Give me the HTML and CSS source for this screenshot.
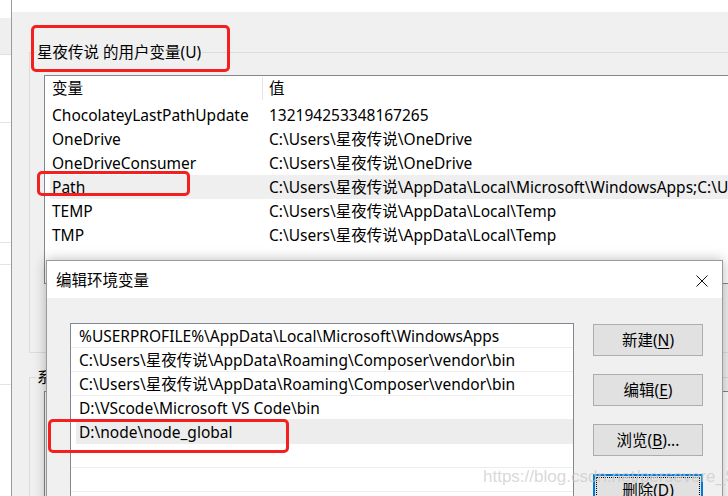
FILE: index.html
```html
<!DOCTYPE html>
<html lang="zh-CN">
<head>
<meta charset="utf-8">
<title>编辑环境变量</title>
<link rel="stylesheet" href="styles.css">
</head>
<body>
<div class="screen">
  <div class="side">
    <div class="side-a"></div>
    <div class="side-b"></div>
    <div class="side-c"></div>
    <div class="side-d"></div>
    <div class="side-e"></div>
    <div class="side-f"></div>
  </div>
  <div class="main">
    <div class="main-top"></div>
    <div class="main-body">
      <fieldset class="group group-user">
        <legend class="group-label">星夜传说 的用户变量(U)</legend>
        <div class="list">
          <div class="list-head">
            <div class="head-cell">变量</div>
            <div class="head-cell head-last">值</div>
          </div>
          <div class="row"><div class="c1">ChocolateyLastPathUpdate</div><div class="c2">132194253348167265</div></div>
          <div class="row"><div class="c1">OneDrive</div><div class="c2">C:\Users\星夜传说\OneDrive</div></div>
          <div class="row"><div class="c1">OneDriveConsumer</div><div class="c2">C:\Users\星夜传说\OneDrive</div></div>
          <div class="row row-sel"><div class="c1">Path</div><div class="c2">C:\Users\星夜传说\AppData\Local\Microsoft\WindowsApps;C:\Users\星夜传说\AppData\Roaming</div></div>
          <div class="row"><div class="c1">TEMP</div><div class="c2">C:\Users\星夜传说\AppData\Local\Temp</div></div>
          <div class="row"><div class="c1">TMP</div><div class="c2">C:\Users\星夜传说\AppData\Local\Temp</div></div>
        </div>
      </fieldset>
      <fieldset class="group group-sys">
        <legend class="group-label">系统变量(S)</legend>
        <div class="list list-sys"></div>
      </fieldset>
    </div>
  </div>
</div>

<div class="dialog">
  <div class="dlg-title">
    <span class="dlg-caption">编辑环境变量</span>
    <svg class="dlg-close" width="12" height="12" viewBox="0 0 12 12"><path d="M0.5 0.5 L11.5 11.5 M11.5 0.5 L0.5 11.5" stroke="#111" stroke-width="1" fill="none"/></svg>
  </div>
  <div class="dlg-body">
    <div class="plist">
      <div class="prow">%USERPROFILE%\AppData\Local\Microsoft\WindowsApps</div>
      <div class="prow">C:\Users\星夜传说\AppData\Roaming\Composer\vendor\bin</div>
      <div class="prow">C:\Users\星夜传说\AppData\Roaming\Composer\vendor\bin</div>
      <div class="prow">D:\VScode\Microsoft VS Code\bin</div>
      <div class="prow prow-sel">D:\node\node_global</div>
      <div class="prow"></div>
      <div class="prow"></div>
    </div>
    <div class="btns">
      <div class="btn">新建(<u>N</u>)</div>
      <div class="btn">编辑(<u>E</u>)</div>
      <div class="btn">浏览(<u>B</u>)...</div>
      <div class="btn btn-focus"><span class="focus-ring">删除(<u>D</u>)</span></div>
    </div>
  </div>
</div>

<div class="mark mark-1"></div>
<div class="mark mark-2"></div>
<div class="mark mark-3"></div>
<div class="watermark">https://blog.csdn.net/persevere_S</div>
</body>
</html>
```
FILE: styles.css
```css
* { box-sizing: border-box; }
html, body { margin: 0; padding: 0; }
body {
  width: 728px;
  height: 496px;
  overflow: hidden;
  position: relative;
  font-family: "Noto Sans", "Noto Sans CJK SC", sans-serif;
  font-size: 15.5px;
  color: #000;
  background: #f0f0f0;
}
.screen {
  display: flex;
  width: 728px;
  height: 496px;
}
.side {
  width: 12px;
  flex: none;
  background: #fff;
  border-right: 1px solid #9a9a9a;
  display: flex;
  flex-direction: column;
}
.side-a { height: 18px; }
.side-b { height: 37px; background: #efefef; border-bottom: 1px solid #e0e0e0; }
.side-c { height: 68px; border-bottom: 1px solid #e3e3e3; }
.side-d { height: 120px; border-bottom: 1px solid #e3e3e3; }
.side-e { height: 22px; border-bottom: 1px solid #e3e3e3; }
.side-f { height: 120px; border-bottom: 1px solid #e3e3e3; }

.main {
  flex: 1;
  min-width: 0;
  display: flex;
  flex-direction: column;
  overflow: hidden;
}
.main-top {
  height: 12px;
  background: #fff;
  flex: none;
}
.main-body {
  flex: 1;
  background: #f0f0f0;
  padding: 30px 0 0 17px;
}
.group {
  margin: 0;
  width: 760px;
  border: 1px solid #dcdcdc;
  padding: 13px 0 68px 14px;
  min-width: 0;
}
.group-label {
  margin-left: -8px;
  padding: 0 1px;
  line-height: 20px;
  height: 20px;
}
.list {
  background: #fff;
  border: 1px solid #828790;
  height: 209px;
  overflow: hidden;
}
.list-head {
  display: grid;
  grid-template-columns: 213px 1fr;
  margin-left: 5px;
  padding: 1px 0 3px;
}
.head-cell {
  height: 23px;
  line-height: 23px;
  padding-left: 2px;
}
.head-cell:first-child { border-right: 1px solid #e5e5e5; }
.head-last { padding-left: 6px; }
.row {
  display: grid;
  grid-template-columns: 213px 1fr;
  margin-left: 5px;
  height: 24px;
  line-height: 24px;
  white-space: nowrap;
}
.row-sel { background: #efefef; }
.c1 { padding-left: 2px; }
.c2 { padding-left: 6px; overflow: hidden; }

.group-sys {
  margin-top: 14px;
  padding-bottom: 0;
  height: 200px;
  padding-top: 4px;
}
.list-sys { height: 200px; }

/* dialog window */
.dialog {
  position: absolute;
  left: 46px;
  top: 260px;
  width: 677px;
  height: 260px;
  border: 1px solid #9a9a9a;
  background: #f0f0f0;
  box-shadow: 0 0 12px rgba(0, 0, 0, 0.28);
  display: flex;
  flex-direction: column;
}
.dlg-title {
  height: 37px;
  flex: none;
  background: #fff;
  display: flex;
  align-items: center;
  justify-content: space-between;
  padding: 0 14px 0 9px;
}
.dlg-caption { line-height: 20px; }
.dlg-close { display: block; margin-top: 2px; }
.dlg-body {
  flex: 1;
  display: flex;
  align-items: flex-start;
  padding: 25px 0 0 23px;
  gap: 19px;
}
.plist {
  width: 504px;
  height: 200px;
  background: #fff;
  border: 1px solid #828790;
  flex: none;
}
.prow {
  height: 24px;
  line-height: 21px;
  padding-top: 2px;
  border-bottom: 1px solid #ededed;
  padding-left: 8px;
  white-space: nowrap;
  overflow: hidden;
}
.prow-sel {
  background: #ededed;
  margin-left: 5px;
  padding-left: 3px;
}
.btns {
  display: flex;
  flex-direction: column;
  gap: 18px;
  padding-top: 1px;
}
.btn {
  width: 110px;
  height: 32px;
  background: #e1e1e1;
  border: 1px solid #adadad;
  display: flex;
  align-items: center;
  justify-content: center;
  line-height: 20px;
}
.btn u { text-underline-offset: 2px; }
.btn-focus {
  border: 2px solid #0078d7;
  padding: 1px;
  align-items: stretch;
}
.focus-ring {
  flex: 1;
  border: 1px dotted #000;
  display: flex;
  align-items: center;
  justify-content: center;
}

/* red annotation boxes */
.mark {
  position: absolute;
  border: 3px solid #f41f1f;
  border-radius: 5px;
}
.mark-1 { left: 31px; top: 25px; width: 199px; height: 47px; }
.mark-2 { left: 37px; top: 171px; width: 153px; height: 25px; }
.mark-3 { left: 48px; top: 419px; width: 241px; height: 34px; }

.watermark {
  position: absolute;
  left: 483px;
  top: 466px;
  font-family: "Liberation Sans", Arial, sans-serif;
  font-size: 17px;
  line-height: 22px;
  color: rgba(200, 200, 200, 0.7);
  white-space: nowrap;
}
```
